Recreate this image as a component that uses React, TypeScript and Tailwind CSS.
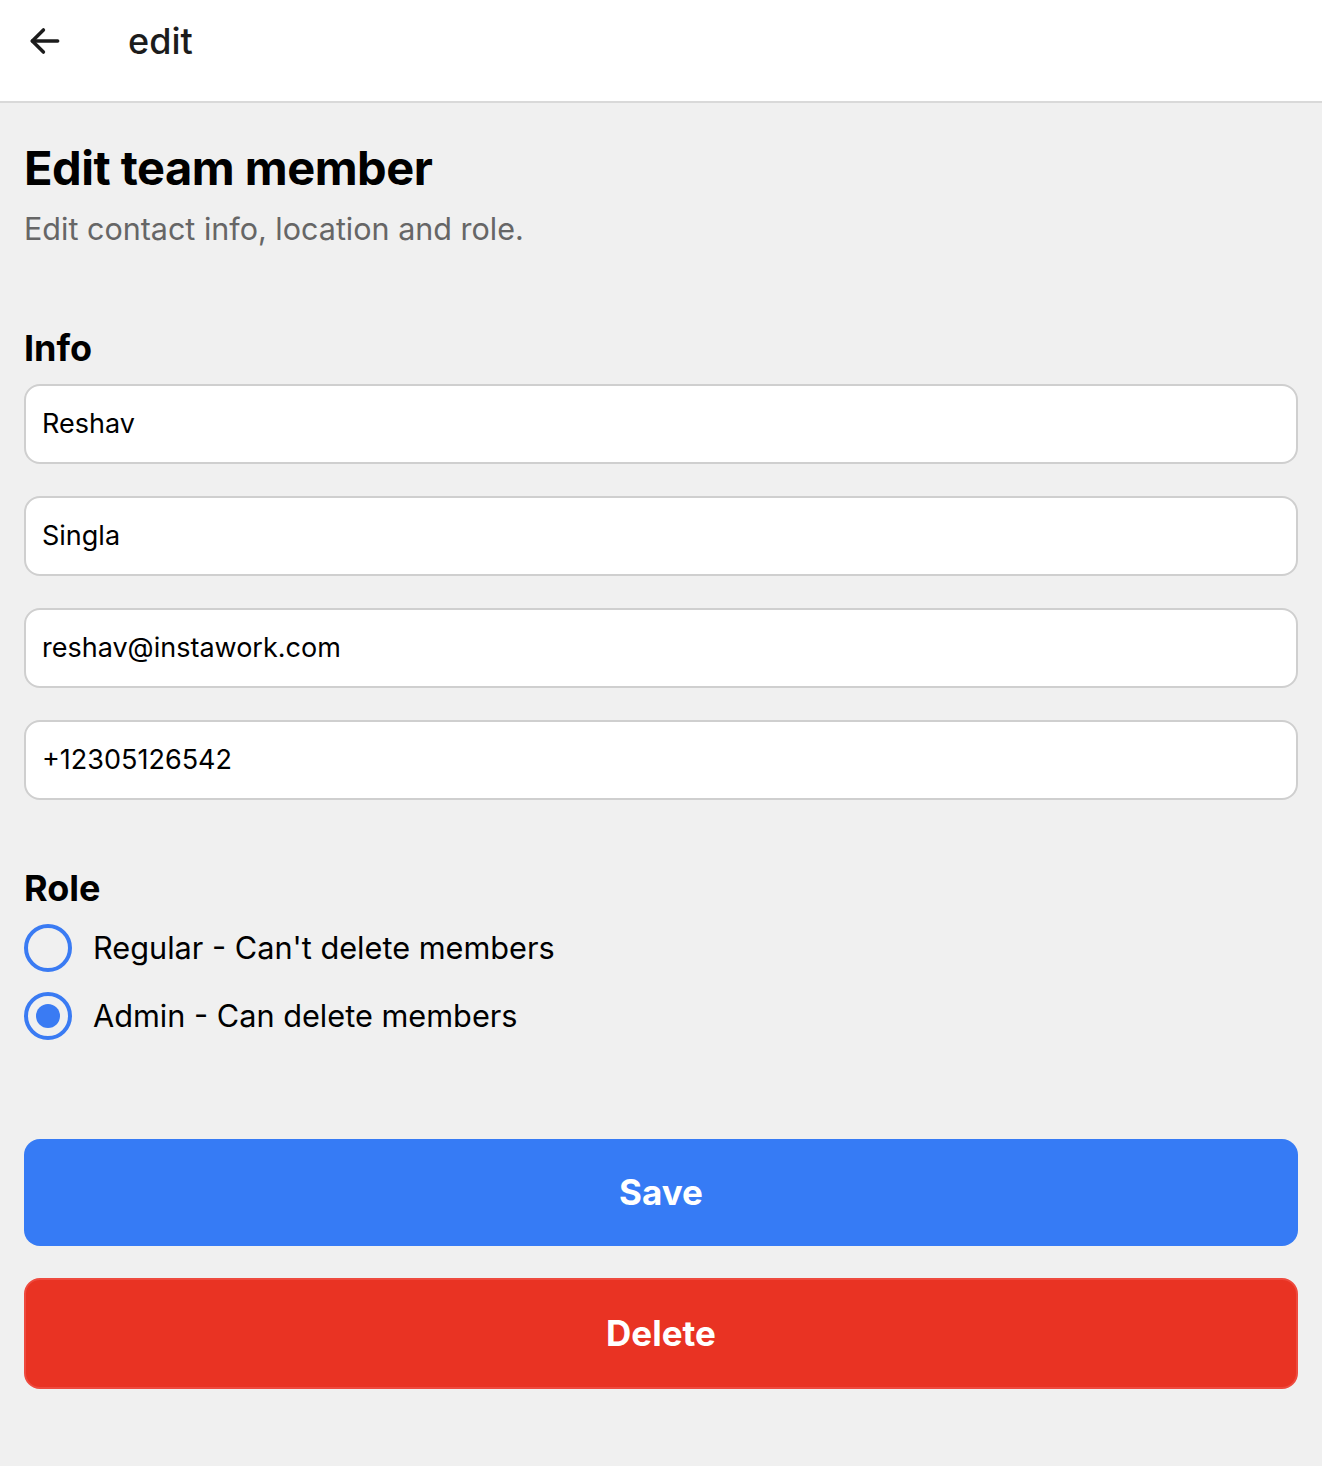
import { useState } from "react";

const fields = ["Reshav", "Singla", "reshav@instawork.com", "+12305126542"];

function Radio({ checked, label, onClick }: { checked: boolean; label: string; onClick: () => void }) {
  return (
    <button type="button" onClick={onClick} className="flex items-center gap-[21px] text-left">
      <span className="flex h-12 w-12 items-center justify-center rounded-full border-4 border-[#3a7bf3] bg-[#f0f0f0]">
        {checked && <span className="h-6 w-6 rounded-full bg-[#3a7bf3]" />}
      </span>
      <span className="text-[30.7px] leading-none text-black">{label}</span>
    </button>
  );
}

export default function App() {
  const [role, setRole] = useState("admin");

  return (
    <div className="min-h-[1466px] bg-[#f0f0f0] font-['Inter','Liberation_Sans',sans-serif]">
      <header className="flex h-[103px] items-center border-b-2 border-[#d9d9d9] bg-white pb-[20px]">
        <button type="button" className="ml-[26px] text-[#1c1c1c]">
          <svg width="38" height="38" viewBox="0 0 24 24" fill="none" stroke="currentColor" strokeWidth="2.2" strokeLinecap="round" strokeLinejoin="round">
            <path d="M20 12H4" />
            <path d="M11 5l-7 7 7 7" />
          </svg>
        </button>
        <span className="ml-[64px] text-[36px] font-medium leading-none text-[#1c1c1c]">edit</span>
      </header>

      <main className="px-6 pt-[36px]">
        <h1 className="text-[47px] font-bold leading-tight tracking-[-0.5px] text-black">Edit team member</h1>
        <p className="mt-[12px] text-[30.5px] leading-tight text-[#666]">Edit contact info, location and role.</p>

        <h2 className="mt-[82px] text-[36px] font-bold leading-none text-black">Info</h2>
        <div className="mt-[18px] flex flex-col gap-8">
          {fields.map((v) => (
            <input
              key={v}
              defaultValue={v}
              className="h-20 w-full rounded-2xl border-2 border-[#cfcfcf] bg-white px-[16px] text-[27px] text-black outline-none"
            />
          ))}
        </div>

        <h2 className="mt-[70px] text-[36px] font-bold leading-none text-black">Role</h2>
        <div className="mt-[18px] flex flex-col gap-5">
          <Radio checked={role === "regular"} label="Regular - Can't delete members" onClick={() => setRole("regular")} />
          <Radio checked={role === "admin"} label="Admin - Can delete members" onClick={() => setRole("admin")} />
        </div>

        <div className="mt-[99px] flex flex-col gap-8">
          <button type="button" className="h-[107px] w-full rounded-2xl bg-[#367bf5] text-[35px] font-bold text-white">
            Save
          </button>
          <button type="button" className="h-[111px] w-full rounded-2xl border-2 border-[#ee4a3e] bg-[#e93323] text-[35px] font-bold text-white">
            Delete
          </button>
        </div>
      </main>
    </div>
  );
}
